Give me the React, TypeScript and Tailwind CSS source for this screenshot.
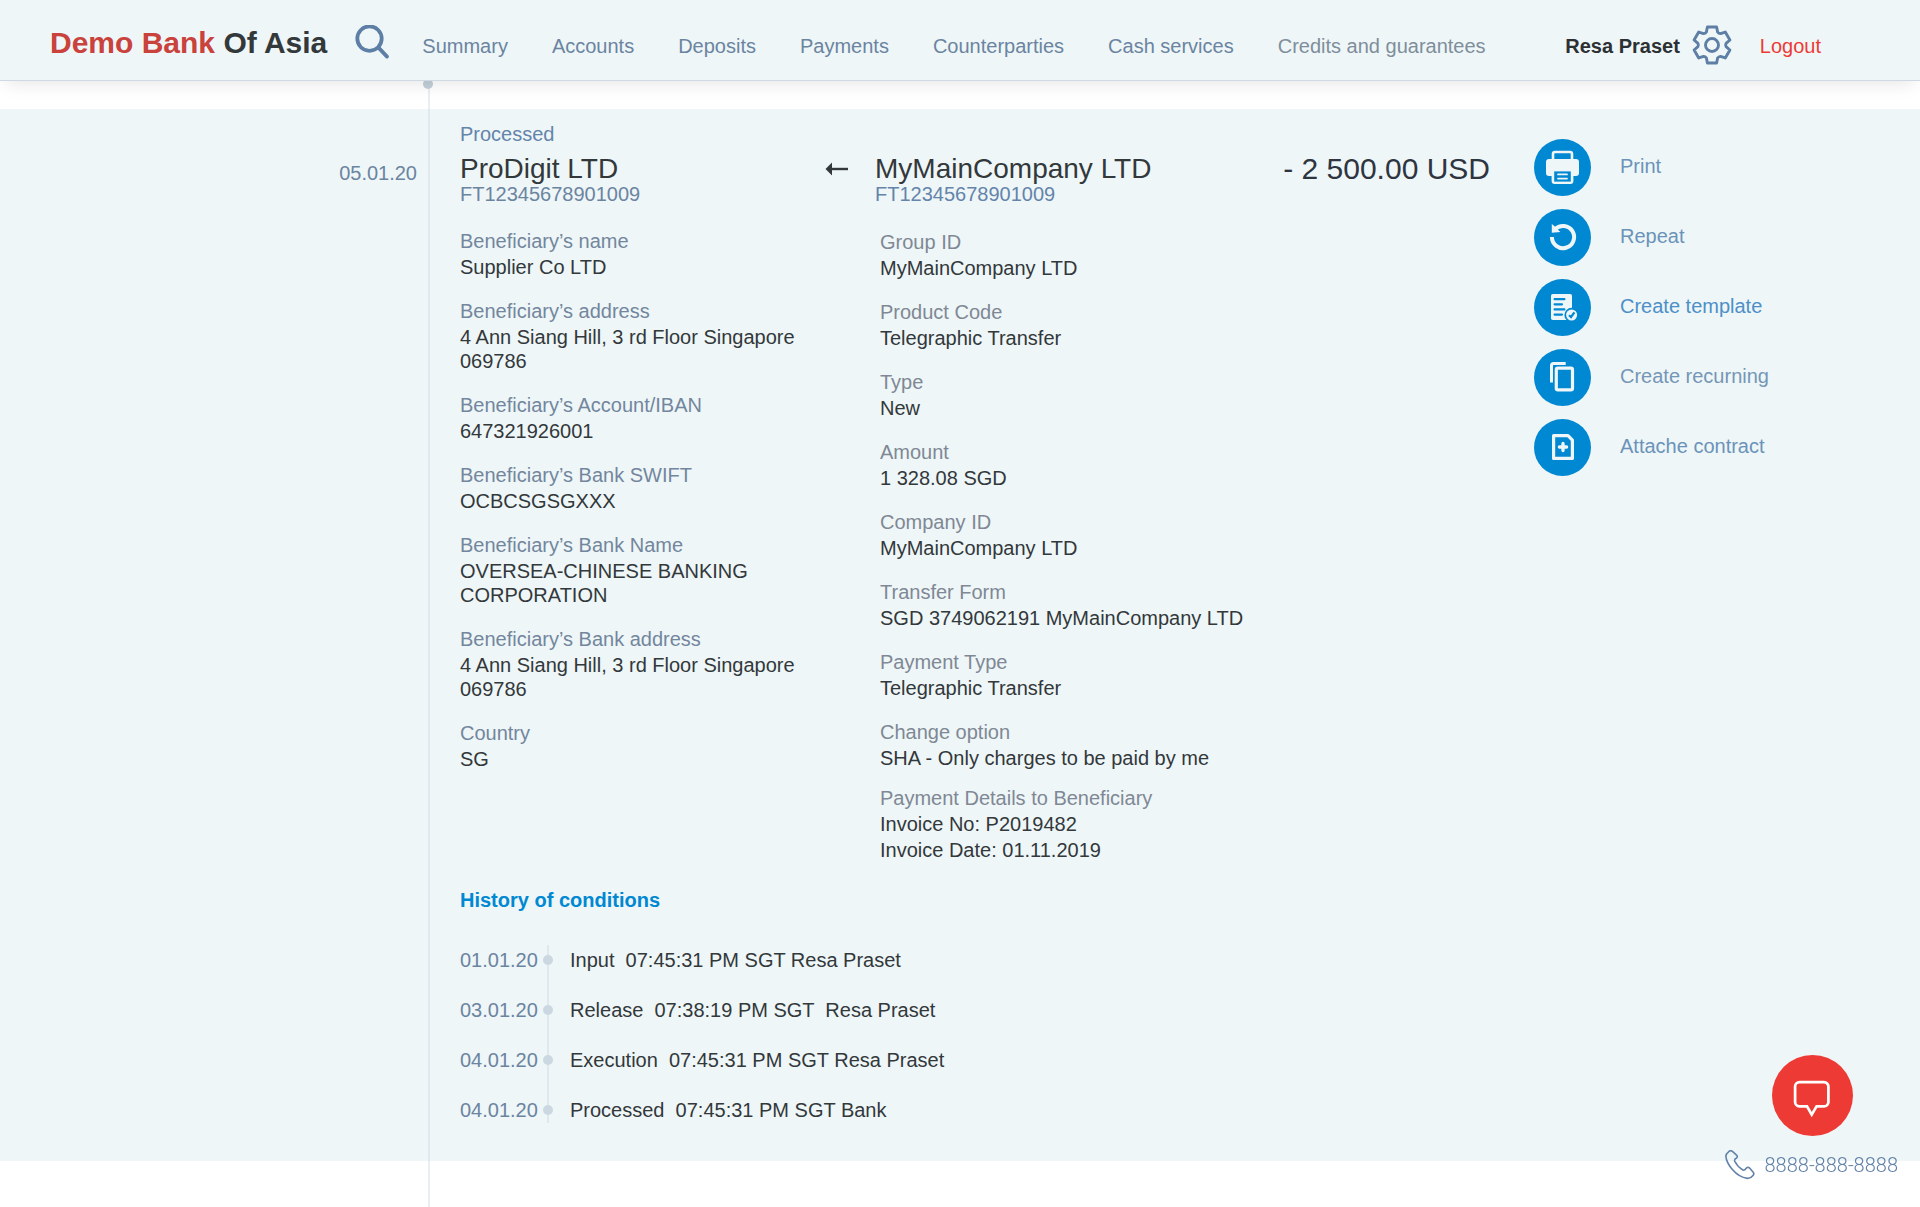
import React from "react";

type Field = { label: string; lines: string[] };

const navItems = [
  "Summary",
  "Accounts",
  "Deposits",
  "Payments",
  "Counterparties",
  "Cash services",
];

const beneficiaryFields: Field[] = [
  { label: "Beneficiary’s name", lines: ["Supplier Co LTD"] },
  { label: "Beneficiary’s address", lines: ["4 Ann Siang Hill, 3 rd Floor Singapore 069786"] },
  { label: "Beneficiary’s Account/IBAN", lines: ["647321926001"] },
  { label: "Beneficiary’s Bank SWIFT", lines: ["OCBCSGSGXXX"] },
  { label: "Beneficiary’s Bank Name", lines: ["OVERSEA-CHINESE BANKING CORPORATION"] },
  { label: "Beneficiary’s Bank address", lines: ["4 Ann Siang Hill, 3 rd Floor Singapore 069786"] },
  { label: "Country", lines: ["SG"] },
];

const transferFields: Field[] = [
  { label: "Group ID", lines: ["MyMainCompany LTD"] },
  { label: "Product Code", lines: ["Telegraphic Transfer"] },
  { label: "Type", lines: ["New"] },
  { label: "Amount", lines: ["1 328.08 SGD"] },
  { label: "Company ID", lines: ["MyMainCompany LTD"] },
  { label: "Transfer Form", lines: ["SGD 3749062191 MyMainCompany LTD"] },
  { label: "Payment Type", lines: ["Telegraphic Transfer"] },
  { label: "Change option", lines: ["SHA - Only charges to be paid by me"] },
];

const paymentDetails: Field = {
  label: "Payment Details to Beneficiary",
  lines: ["Invoice No: P2019482", "Invoice Date: 01.11.2019"],
};

const historyRows = [
  { date: "01.01.20", text: "Input  07:45:31 PM SGT Resa Praset" },
  { date: "03.01.20", text: "Release  07:38:19 PM SGT  Resa Praset" },
  { date: "04.01.20", text: "Execution  07:45:31 PM SGT Resa Praset" },
  { date: "04.01.20", text: "Processed  07:45:31 PM SGT Bank" },
];

// Six-toothed gear outline centred on the origin, one tooth per 60 degrees.
function gearPath(): string {
  const at = (x: number, y: number, deg: number) => {
    const a = (deg * Math.PI) / 180;
    const px = x * Math.cos(a) - y * Math.sin(a);
    const py = x * Math.sin(a) + y * Math.cos(a);
    return `${px.toFixed(2)} ${py.toFixed(2)}`;
  };
  const parts: string[] = [];
  for (let i = 0; i < 6; i++) {
    const d = i * 60;
    parts.push(
      `${i === 0 ? "M" : "L"}${at(-5.6, -13, d)} L${at(-4.6, -18, d)} L${at(4.6, -18, d)} L${at(5.6, -13, d)} Q${at(6.6, -11.4, d)} ${at(-5.6, -13, d + 60)}`,
    );
  }
  return parts.join(" ") + " Z";
}

function SearchIcon() {
  return (
    <svg width="35" height="35" viewBox="0 0 35 35" fill="none" stroke="#5d7fa6" strokeWidth="3.8" strokeLinecap="round" aria-hidden="true">
      <circle cx="14.5" cy="13.6" r="12.2" />
      <path d="M23.5 22.6 L32 31.6" />
    </svg>
  );
}

function GearIcon() {
  return (
    <svg width="40" height="40" viewBox="-20 -20 40 40" fill="none" stroke="#5d7fa6" strokeWidth="2.9" strokeLinejoin="round" aria-hidden="true">
      <path d={gearPath()} />
      <circle r="6.5" />
    </svg>
  );
}

function ArrowLeftIcon() {
  return (
    <svg width="24" height="14" viewBox="0 0 24 14" aria-hidden="true">
      <path d="M0.5 7 L7 0.5 V13.5 Z" fill="#33383b" />
      <path d="M6 7 H23" stroke="#33383b" strokeWidth="2.4" />
    </svg>
  );
}

const actions = [
  {
    label: "Print",
    tone: "text-[#6b93b9]",
    icon: (
      <>
        <path d="M19 21 V15 a2 2 0 0 1 2 -2 H36 a2 2 0 0 1 2 2 V21" fill="none" stroke="#eef6f8" strokeWidth="2.6" />
        <path d="M15 20 H42 a3 3 0 0 1 3 3 V34 a3 3 0 0 1 -3 3 H39.4 V42 a3 3 0 0 1 -3 3 H20.6 a3 3 0 0 1 -3 -3 V37 H15 a3 3 0 0 1 -3 -3 V23 a3 3 0 0 1 3 -3 Z" fill="#eef6f8" />
        <path d="M20.2 32.4 H36.8 V42.6 H20.2 Z" fill="#0088d2" />
        <path d="M24 35.4 H33 M24 39.6 H33" stroke="#eef6f8" strokeWidth="1.8" strokeLinecap="round" />
      </>
    ),
  },
  {
    label: "Repeat",
    tone: "text-[#6b93b9]",
    icon: (
      <>
        <path d="M17.9 28 A11.1 11.1 0 1 0 21 20.3" fill="none" stroke="#eef6f8" strokeWidth="4" />
        <path d="M17.8 15 V23.8 L26.4 23 L24.2 21 L21.5 18 Z" fill="#eef6f8" />
      </>
    ),
  },
  {
    label: "Create template",
    tone: "text-[#4d8fc7]",
    icon: (
      <>
        <rect x="17" y="15" width="21" height="26" rx="1.8" fill="#eef6f8" />
        <path d="M20.6 20.2 H30.4 M20.6 25.3 H28 M20.6 30.4 H30.4 M20.6 35.6 H28" stroke="#0088d2" strokeWidth="2.2" strokeLinecap="round" />
        <circle cx="37.6" cy="36" r="7.2" fill="#0088d2" />
        <circle cx="37.6" cy="36" r="5.5" fill="#eef6f8" />
        <path d="M35 36.2 L37 38 L40.4 33.4" fill="none" stroke="#0088d2" strokeWidth="2.2" />
      </>
    ),
  },
  {
    label: "Create recurning",
    tone: "text-[#7596b6]",
    icon: (
      <>
        <path d="M17.5 33.6 V16.5 a2 2 0 0 1 2 -2 H31.7" fill="none" stroke="#eef6f8" strokeWidth="3" />
        <rect x="22.3" y="19.2" width="16.2" height="21.6" rx="1.6" fill="none" stroke="#eef6f8" strokeWidth="3.2" />
      </>
    ),
  },
  {
    label: "Attache contract",
    tone: "text-[#6b93b9]",
    icon: (
      <>
        <path d="M19.6 16.6 H34 L38.4 21.2 V39.4 H19.6 Z" fill="none" stroke="#eef6f8" strokeWidth="3.2" strokeLinejoin="round" />
        <path d="M29 24.4 V31.6 M25.4 28 H32.6" stroke="#eef6f8" strokeWidth="3.3" strokeLinecap="round" />
      </>
    ),
  },
];

function FieldBlock({ field, tone }: { field: Field; tone: string }) {
  return (
    <div>
      <dt className={tone}>{field.label}</dt>
      {field.lines.map((line) => (
        <dd key={line} className="mt-0.5 text-[#33383b]">
          {line}
        </dd>
      ))}
    </div>
  );
}

function Header() {
  return (
    <header className="relative z-10 flex h-[81px] items-baseline border-b border-[#d0d9e3] bg-[#eef6f8] pt-[25px] pr-[99px] pl-[50px] shadow-[0_10px_16px_-6px_rgba(0,0,0,0.09)]">
      <h1 className="text-[30px] leading-9 font-bold whitespace-nowrap text-[#33383b]">
        <span className="text-[#c9423c]">Demo Bank</span> Of Asia
      </h1>
      <button type="button" aria-label="Search" className="ml-7 shrink-0 self-start">
        <SearchIcon />
      </button>
      <nav className="ml-8 flex gap-11 whitespace-nowrap text-[#6b84a0]">
        {navItems.map((item) => (
          <a key={item} href="#">
            {item}
          </a>
        ))}
        <a href="#" className="text-[#7f8e9b]">
          Credits and guarantees
        </a>
      </nav>
      <span className="ml-auto font-bold whitespace-nowrap text-[#2c3033]">Resa Praset</span>
      <button type="button" aria-label="Settings" className="ml-3 shrink-0 self-start">
        <GearIcon />
      </button>
      <a href="#" className="ml-7 text-[#ee3a34]">
        Logout
      </a>
    </header>
  );
}

function History() {
  return (
    <section>
      <h2 className="mt-[26px] font-bold text-[#0088d2]">History of conditions</h2>
      <div className="relative mt-[23px]">
        <div className="absolute top-[10px] bottom-3 left-[87px] w-0.5 bg-[#e0e8ee]" />
        <ul>
          {historyRows.map((row) => (
            <li key={row.text} className="flex h-[50px] items-center">
              <time className="w-[83px] text-[#6b84a0]">{row.date}</time>
              <span className="relative size-[10px] rounded-full bg-[#cbd8e1]" />
              <span className="ml-[17px] whitespace-pre text-[#33383b]">{row.text}</span>
            </li>
          ))}
        </ul>
      </div>
    </section>
  );
}

export default function App() {
  return (
    <div className="flex min-h-screen flex-col bg-white font-['Liberation_Sans',Arial,sans-serif] text-[20px] leading-6">
      <Header />
      <div className="h-7 w-[430px] border-r-2 border-[#e9eef3]">
        <div className="ml-auto size-[10px] translate-x-[5px] -translate-y-0.5 rounded-full bg-[#c3d0d9]" />
      </div>

      <main className="flex bg-[#eef6f8]">
        <div className="w-[430px] shrink-0 border-r-2 border-[#e1e8ee] pt-[52px] pr-[11px] text-right text-[#6b84a0]">
          <time>05.01.20</time>
        </div>

        <article className="min-w-0 flex-1 pt-[13px] pr-[44px] pb-[26px] pl-[30px]">
          <p className="text-[#6484aa]">Processed</p>
          <div className="mt-[9px] grid grid-cols-[365px_1fr_auto]">
            <div>
              <h2 className="text-[28px] leading-7 text-[#33383b]">ProDigit LTD</h2>
              <p className="leading-[22px] text-[#6b84a0]">FT12345678901009</p>
            </div>
            <div className="flex">
              <div className="flex h-7 w-[50px] items-center">
                <ArrowLeftIcon />
              </div>
              <div>
                <h2 className="text-[28px] leading-7 text-[#33383b]">MyMainCompany LTD</h2>
                <p className="leading-[22px] text-[#6484aa]">FT12345678901009</p>
              </div>
            </div>
            <p className="text-[30px] leading-7 text-[#2e3540]">- 2 500.00 USD</p>
          </div>

          <div className="mt-6 grid grid-cols-[365px_1fr]">
            <dl className="flex flex-col gap-5">
              {beneficiaryFields.map((f) => (
                <FieldBlock key={f.label} field={f} tone="text-[#73869d]" />
              ))}
            </dl>
            <div className="pt-px pl-[55px]">
              <dl className="flex flex-col gap-5">
                {transferFields.map((f) => (
                  <FieldBlock key={f.label} field={f} tone="text-[#7f8894]" />
                ))}
              </dl>
              <dl className="mt-4">
                <FieldBlock field={paymentDetails} tone="text-[#7f8894]" />
              </dl>
            </div>
          </div>

          <History />
        </article>

        <aside className="w-[386px] shrink-0 pt-[30px]">
          <ul className="flex flex-col gap-[13px]">
            {actions.map((a) => (
              <li key={a.label}>
                <button type="button" className={`flex items-center gap-[29px] ${a.tone}`}>
                  <svg width="57" height="57" viewBox="0 0 57 57" aria-hidden="true">
                    <circle cx="28.5" cy="28.5" r="28.5" fill="#0088d2" />
                    {a.icon}
                  </svg>
                  <span className="pb-1">{a.label}</span>
                </button>
              </li>
            ))}
          </ul>
        </aside>
      </main>

      <div className="w-[430px] flex-1 border-r-2 border-[#e9eef3]" />

      <div className="fixed right-[22px] bottom-[27px] z-10 flex flex-col items-end gap-[14px]">
        <button type="button" aria-label="Open chat" className="mr-[45px] rounded-full">
          <svg width="81" height="81" viewBox="0 0 81 81" fill="none" aria-hidden="true">
            <circle cx="40.5" cy="40.5" r="40.5" fill="#ee3a34" />
            <path
              d="M27.5 27.2 H52 a4.4 4.4 0 0 1 4.4 4.4 V47 a4.4 4.4 0 0 1 -4.4 4.4 H44.6 L39.7 59.6 L35 51.4 H27.5 a4.4 4.4 0 0 1 -4.4 -4.4 V31.6 a4.4 4.4 0 0 1 4.4 -4.4 Z"
              stroke="#fff"
              strokeWidth="2.7"
            />
          </svg>
        </button>
        <a href="tel:8888-888-8888" className="flex items-center gap-[10px] font-[Roboto] font-light text-[#6282a8]">
          <svg width="30" height="30" viewBox="0 0 30 30" fill="none" stroke="#6282a8" strokeWidth="1.6" strokeLinejoin="round" aria-hidden="true">
            <path d="M3.8 1.6 Q5.6 0 7.4 1.4 L11.8 5.4 Q12.9 6.7 11.6 8 Q9.2 9 9.6 11 Q12.4 16.6 18 20.2 Q19.6 20.6 21.4 18 Q23 16.6 24.6 18 L28.4 22.4 Q29.4 24 28 25.4 Q25.4 28.6 22.4 28.4 Q14 27.4 7.4 19.6 Q1.4 12.4 0.9 6.6 Q0.8 3.8 3.8 1.6 Z" />
          </svg>
          <span>8888-888-8888</span>
        </a>
      </div>
    </div>
  );
}
